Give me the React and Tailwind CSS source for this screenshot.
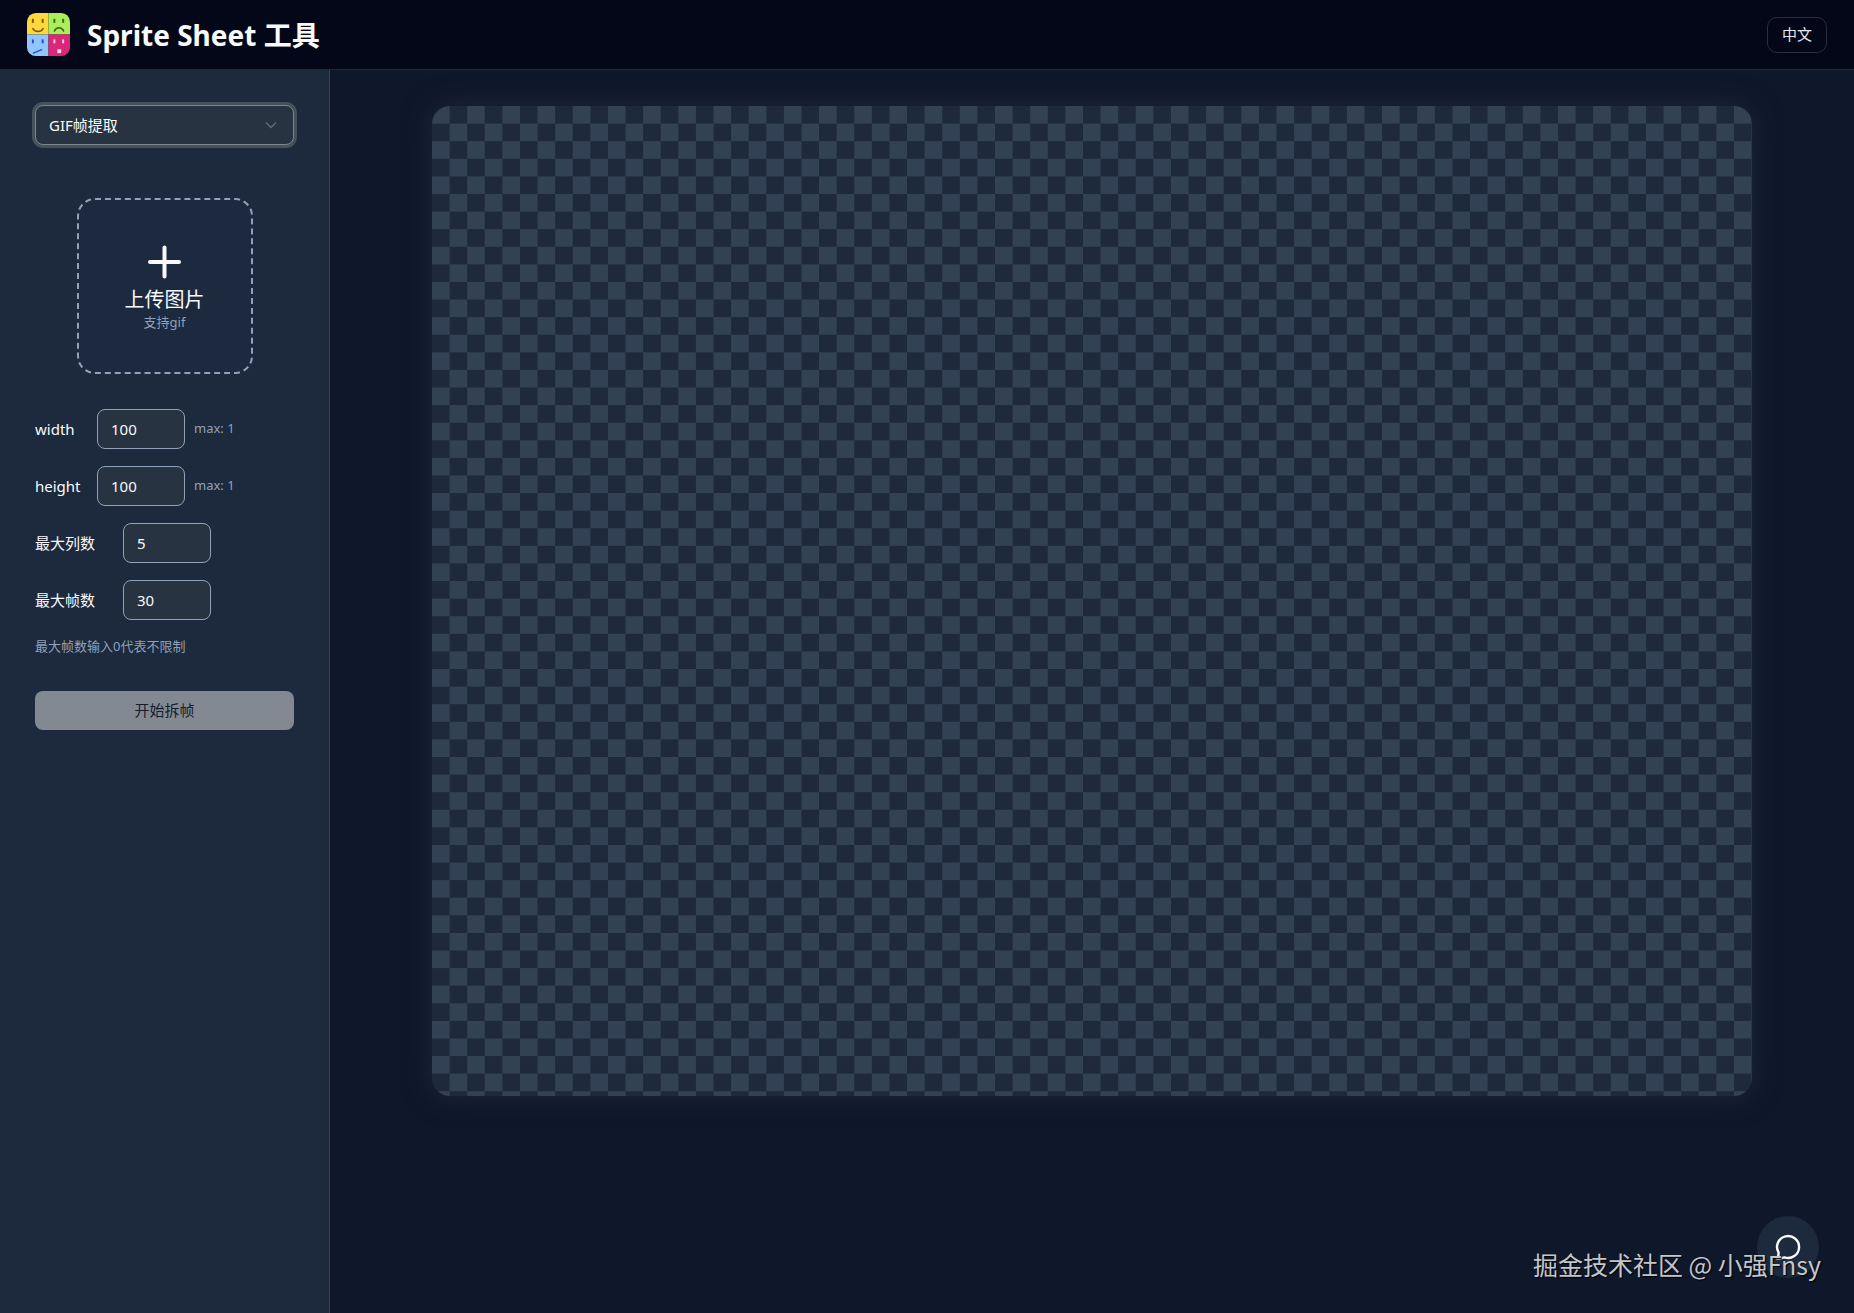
import React, { useState } from "react";

const tools = [
  { value: "gif", label: "GIF帧提取" },
  { value: "merge", label: "合成精灵图" },
  { value: "split", label: "拆分精灵图" },
];

const Logo = () => (
  <svg viewBox="0 0 44 44" className="size-[43px]" aria-hidden="true">
    <defs>
      <clipPath id="logo-clip">
        <rect width="44" height="44" rx="9" />
      </clipPath>
    </defs>
    <g clipPath="url(#logo-clip)">
      <rect width="22" height="22" fill="#fcd83a" />
      <rect x="22" width="22" height="22" fill="#abee5c" />
      <rect y="22" width="22" height="22" fill="#93c5fd" />
      <rect x="22" y="22" width="22" height="22" fill="#db2777" />
      <g fill="#854d0e">
        <rect x="5" y="6" width="2" height="4" />
        <rect x="15" y="6" width="2" height="4" />
      </g>
      <g fill="#3f6212">
        <rect x="27" y="6" width="2" height="4" />
        <rect x="36" y="6" width="2" height="4" />
      </g>
      <g fill="#1d4ed8">
        <rect x="5" y="27" width="2" height="4" />
        <rect x="15" y="27" width="2" height="4" />
      </g>
      <g fill="#fbcfe8">
        <rect x="27" y="27" width="2" height="4" />
        <rect x="36" y="27" width="2" height="4" />
        <rect x="31" y="37" width="4" height="4" />
      </g>
      <g fill="none" strokeWidth="1.5" strokeLinecap="round">
        <path d="M6 16c2.500 4 8 4 10.500 0" stroke="#854d0e" />
        <path d="M28 18.500c2-4.500 7.500-4.500 9.500 0" stroke="#3f6212" />
        <path d="M6.500 41l8.500-3.500" stroke="#1d4ed8" />
      </g>
    </g>
  </svg>
);

const NumberField = ({ id, label, labelClass, value, onChange, hint }) => (
  <div className="flex items-center">
    <label htmlFor={id} className={labelClass}>
      {label}
    </label>
    <input
      id={id}
      type="text"
      inputMode="numeric"
      value={value}
      onChange={(e) => onChange(id, e.target.value)}
      className="h-10 w-22 rounded-lg border border-slate-400 bg-[#283342] px-[13px] text-[15px] text-slate-50 outline-none"
    />
    {hint && (
      <span className="ml-[9px] text-[13px] text-slate-400">{hint}</span>
    )}
  </div>
);

const Sidebar = () => {
  const [tool, setTool] = useState("gif");
  const [formData, setFormData] = useState({
    width: "100",
    height: "100",
    columns: "5",
    frames: "30",
  });

  const handleChange = (name, value) => {
    setFormData((prev) => ({ ...prev, [name]: value }));
  };

  return (
    <aside className="w-[330px] shrink-0 border-r border-slate-700 bg-slate-800 px-[35px] pt-[35px]">
      <div className="relative">
        <select
          aria-label="工具"
          value={tool}
          onChange={(e) => setTool(e.target.value)}
          className="h-10 w-full appearance-none rounded-lg border border-[#7d868f] bg-[#283342] px-[13px] text-[15px] text-slate-50 ring-3 ring-[#46525b] outline-none"
        >
          {tools.map((item) => (
            <option key={item.value} value={item.value}>
              {item.label}
            </option>
          ))}
        </select>
        <svg
          viewBox="0 0 12 12"
          className="pointer-events-none absolute top-[14px] right-[17px] size-3"
          fill="none"
          stroke="#5f6a78"
          strokeWidth="1.5"
        >
          <path d="M1 3.500l5 5 5-5" />
        </svg>
      </div>

      <button
        type="button"
        className="mx-auto mt-[53px] flex size-44 flex-col items-center justify-center rounded-[18px] border-2 border-dashed border-slate-400 bg-[#1d293f] pt-1 text-slate-50"
      >
        <svg
          viewBox="0 0 36 36"
          className="size-9"
          fill="none"
          stroke="currentColor"
          strokeWidth="4"
          strokeLinecap="round"
        >
          <path d="M17.500 3.500v29M3 18h29" />
        </svg>
        <span className="mt-2 text-xl leading-6">上传图片</span>
        <span className="text-[13px] leading-5 text-slate-400">支持gif</span>
      </button>

      <form className="mt-[35px]" onSubmit={(e) => e.preventDefault()}>
        <div className="flex flex-col gap-[17px] text-[15px] text-slate-50">
          <NumberField
            id="width"
            label="width"
            labelClass="w-[62px]"
            value={formData.width}
            onChange={handleChange}
            hint="max: 1"
          />
          <NumberField
            id="height"
            label="height"
            labelClass="w-[62px]"
            value={formData.height}
            onChange={handleChange}
            hint="max: 1"
          />
          <NumberField
            id="columns"
            label="最大列数"
            labelClass="w-[88px]"
            value={formData.columns}
            onChange={handleChange}
          />
          <NumberField
            id="frames"
            label="最大帧数"
            labelClass="w-[88px]"
            value={formData.frames}
            onChange={handleChange}
          />
        </div>
        <p className="mt-4 text-[13px] leading-5 text-slate-400">
          最大帧数输入0代表不限制
        </p>
        <button
          type="submit"
          disabled
          className="mt-[35px] h-[39px] w-full rounded-lg bg-[#838992] text-[15px] text-[#161c2b]"
        >
          开始拆帧
        </button>
      </form>
    </aside>
  );
};

const App = () => {
  return (
    <div className="relative flex min-h-screen flex-col bg-[#0f172a] font-['Noto_Sans','Noto_Sans_CJK_SC',sans-serif]">
      <header className="flex h-[70px] items-center border-b border-slate-800 bg-[#030718] px-[27px]">
        <Logo />
        <h1 className="ml-[17px] text-[28px] font-bold text-slate-50">
          Sprite Sheet 工具
        </h1>
        <button
          type="button"
          className="ml-auto h-9 rounded-[10px] border border-[#273040] px-[14px] text-[15px] text-slate-200"
        >
          中文
        </button>
      </header>

      <div className="flex flex-1">
        <Sidebar />
        <main className="flex-1 px-9 py-9">
          {/* transparent canvas backdrop */}
          <div className="mx-auto aspect-4/3 w-full max-w-[1320px] rounded-[18px] bg-[repeating-conic-gradient(#1e293b_0%_25%,#334155_0%_50%)] bg-[length:calc(100%/37.5)_calc(100%/28.125)] shadow-[0_0_28px_#1e293b]" />
        </main>
      </div>

      <button
        type="button"
        aria-label="反馈"
        className="absolute right-[35px] bottom-[35px] flex size-[62px] items-center justify-center rounded-full bg-slate-800 text-slate-50"
      >
        <svg
          viewBox="0 0 28 28"
          className="size-7"
          fill="none"
          stroke="currentColor"
          strokeWidth="2.4"
          strokeLinecap="round"
          strokeLinejoin="round"
        >
          <path d="M10.500 24.400A11 11 0 1 0 4.600 19.600Q4.800 23 2.800 25.400Q7 25.600 10.500 24.400Z" />
        </svg>
      </button>
      <p className="pointer-events-none absolute right-[33px] bottom-[30px] font-['Noto_Sans_CJK_SC',sans-serif] text-[25px] text-[#c3c6cb] [text-shadow:1px_1px_1px_#000]">
        掘金技术社区 @ 小强Fnsy
      </p>
    </div>
  );
};

export default App;
